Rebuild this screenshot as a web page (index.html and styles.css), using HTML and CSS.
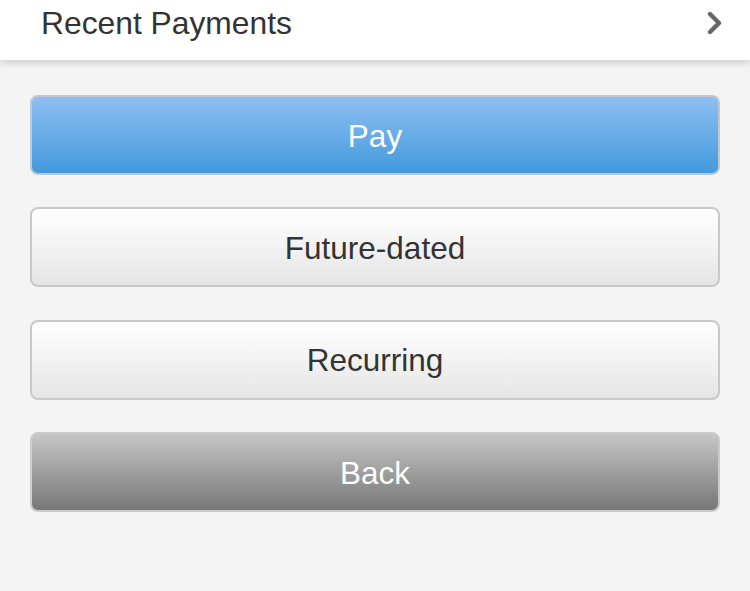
FILE: index.html
```html
<!DOCTYPE html>
<html lang="en">
<head>
<meta charset="utf-8">
<title>Payments</title>
<link rel="stylesheet" href="styles.css">
</head>
<body>
<header class="header">
  <span class="header-title">Recent Payments</span>
  <svg class="chevron" width="18" height="24" viewBox="0 0 18 24" aria-hidden="true">
    <polyline points="4,3 13,12 4,21" fill="none" stroke="#666" stroke-width="4.4" stroke-linecap="round" stroke-linejoin="round"/>
  </svg>
</header>
<main class="actions">
  <button class="btn btn-primary">Pay</button>
  <button class="btn btn-light">Future-dated</button>
  <button class="btn btn-light">Recurring</button>
  <button class="btn btn-dark">Back</button>
</main>
</body>
</html>
```
FILE: styles.css
```css
html, body {
  margin: 0;
  padding: 0;
}
body {
  background: #f4f4f4;
  font-family: "Liberation Sans", Arial, Helvetica, sans-serif;
  width: 750px;
  height: 591px;
  overflow: hidden;
}
.header {
  height: 60px;
  box-sizing: border-box;
  background: #fff;
  display: flex;
  align-items: flex-start;
  justify-content: space-between;
  padding: 5px 26px 0 41px;
  box-shadow: 0 3px 7px rgba(0, 0, 0, 0.16);
  position: relative;
}
.header-title {
  font-size: 31.8px;
  line-height: 36px;
  color: #333;
}
.chevron {
  margin-top: 6px;
}
.actions {
  display: flex;
  flex-direction: column;
  gap: 32.4px;
  padding: 35px 30px 0 30px;
}
.btn {
  height: 80px;
  box-sizing: border-box;
  border: 2px solid #c6c6c6;
  border-radius: 8px;
  font-family: inherit;
  font-size: 31.5px;
  display: flex;
  align-items: center;
  justify-content: center;
  padding: 2px 0 0 0;
  width: 100%;
}
.btn-primary {
  background: linear-gradient(to bottom, #8fbff2, #4399dd);
  color: #fff;
  border-color: #bfc8d2;
}
.btn-light {
  background: linear-gradient(to bottom, #ffffff, #e5e5e5);
  color: #333;
  border-color: #c8c8c8;
}
.btn-dark {
  background: linear-gradient(to bottom, #c6c6c6, #777777);
  color: #fff;
  border-color: #cbcbcb;
}
```
